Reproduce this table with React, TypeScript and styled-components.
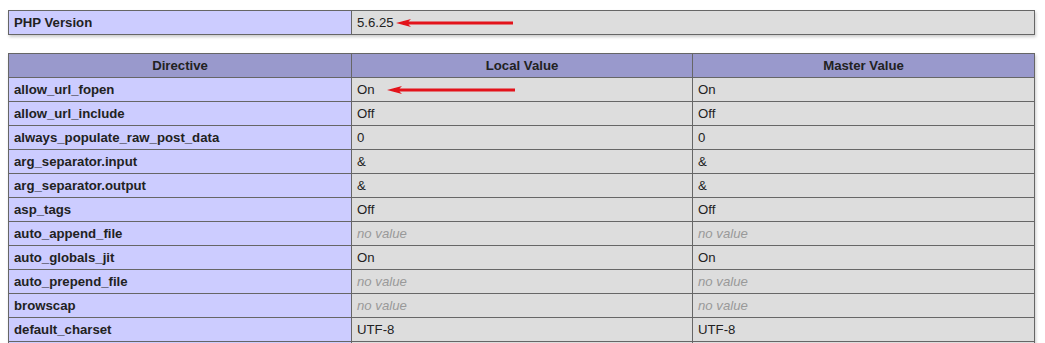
import React from "react";
import styled, { createGlobalStyle } from "styled-components";

const Global = createGlobalStyle`
  html, body { margin: 0; padding: 0; background: #fff; }
  body {
    padding: 10px 8px 8px 8px;
    font-family: "Liberation Sans", Arial, Helvetica, sans-serif;
    color: #222;
  }
`;

const Table = styled.table<{ $gap?: number }>`
  border-collapse: collapse;
  border: 0;
  width: 1027px;
  table-layout: fixed;
  box-shadow: 1px 2px 3px #ccc;
  margin-bottom: ${(p) => p.$gap ?? 0}px;
`;

const Cell = styled.td`
  border: 1px solid #666;
  font-size: 13.2px;
  line-height: 15px;
  padding: 4px 5px;
  vertical-align: baseline;
  text-align: left;
  white-space: nowrap;
  overflow: visible;
`;

const Key = styled(Cell)`
  background-color: #ccf;
  font-weight: bold;
  color: #222;
`;

const Val = styled(Cell)`
  background-color: #ddd;
  color: #222;
`;

const Head = styled.th`
  border: 1px solid #666;
  font-size: 13.2px;
  line-height: 15px;
  padding: 4px 5px;
  background-color: #99c;
  font-weight: bold;
  color: #222;
  text-align: center;
`;

const NoValue = styled.i`
  color: #999;
`;

const ArrowSvg = styled.svg<{ $ml: number }>`
  display: inline-block;
  vertical-align: -1px;
  margin-left: ${(p) => p.$ml}px;
  overflow: visible;
`;

function Arrow({ length, ml }: { length: number; ml: number }) {
  return (
    <ArrowSvg $ml={ml} width={length} height={10} viewBox={`0 0 ${length} 10`}>
      <polygon
        points={`0,5 15,1 12.5,3.6 ${length},3.6 ${length},6.4 12.5,6.4 15,9`}
        fill="#e3131b"
      />
    </ArrowSvg>
  );
}

type Row = { name: string; local: string | null; master: string | null; arrow?: boolean };

const rows: Row[] = [
  { name: "allow_url_fopen", local: "On", master: "On", arrow: true },
  { name: "allow_url_include", local: "Off", master: "Off" },
  { name: "always_populate_raw_post_data", local: "0", master: "0" },
  { name: "arg_separator.input", local: "&", master: "&" },
  { name: "arg_separator.output", local: "&", master: "&" },
  { name: "asp_tags", local: "Off", master: "Off" },
  { name: "auto_append_file", local: null, master: null },
  { name: "auto_globals_jit", local: "On", master: "On" },
  { name: "auto_prepend_file", local: null, master: null },
  { name: "browscap", local: null, master: null },
  { name: "default_charset", local: "UTF-8", master: "UTF-8" },
  { name: "default_mimetype", local: "text/html", master: "text/html" },
];

const show = (v: string | null) => (v === null ? <NoValue>no value</NoValue> : v);

export default function App() {
  return (
    <>
      <Global />
      <Table $gap={18}>
        <colgroup>
          <col style={{ width: 343 }} />
          <col />
        </colgroup>
        <tbody>
          <tr>
            <Key>PHP Version</Key>
            <Val>
              5.6.25
              <Arrow length={117} ml={2} />
            </Val>
          </tr>
        </tbody>
      </Table>
      <Table>
        <colgroup>
          <col style={{ width: 343 }} />
          <col style={{ width: 341 }} />
          <col />
        </colgroup>
        <thead>
          <tr>
            <Head>Directive</Head>
            <Head>Local Value</Head>
            <Head>Master Value</Head>
          </tr>
        </thead>
        <tbody>
          {rows.map((r) => (
            <tr key={r.name}>
              <Key>{r.name}</Key>
              <Val>
                {show(r.local)}
                {r.arrow && <Arrow length={128} ml={12} />}
              </Val>
              <Val>{show(r.master)}</Val>
            </tr>
          ))}
        </tbody>
      </Table>
    </>
  );
}
